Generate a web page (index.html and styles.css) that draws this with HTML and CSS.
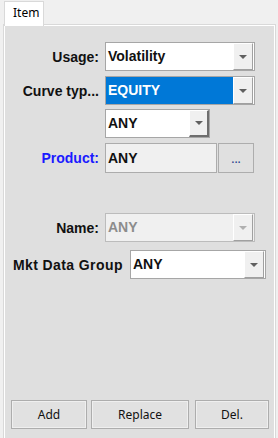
FILE: index.html
```html
<!DOCTYPE html>
<html lang="en">
<head>
  <meta charset="UTF-8">
  <title>Item</title>
  <link rel="stylesheet" href="styles.css">
</head>
<body>
  <div class="tabs">
    <div class="tab">Item</div>
  </div>
  <div class="panel">
    <div class="row row-usage">
      <label class="lbl">Usage:</label>
      <div class="combo w150">
        <span class="val">Volatility</span>
        <span class="drop"><i class="tri"></i></span>
      </div>
    </div>
    <div class="row row-curve">
      <label class="lbl">Curve typ...</label>
      <div class="combo w150 selected">
        <span class="val">EQUITY</span>
        <span class="drop"><i class="tri"></i></span>
      </div>
    </div>
    <div class="row row-any">
      <label class="lbl"></label>
      <div class="combo w105">
        <span class="val">ANY</span>
        <span class="drop raised"><i class="tri"></i></span>
      </div>
    </div>
    <div class="row row-product">
      <label class="lbl link">Product:</label>
      <div class="field">ANY</div>
      <button class="more">...</button>
    </div>
    <div class="row row-name">
      <label class="lbl">Name:</label>
      <div class="combo w150 disabled">
        <span class="val">ANY</span>
        <span class="drop"><i class="tri"></i></span>
      </div>
    </div>
    <div class="row row-group">
      <label class="lbl-wide">Mkt Data Group</label>
      <div class="combo w136">
        <span class="val">ANY</span>
        <span class="drop"><i class="tri"></i></span>
      </div>
    </div>
    <div class="actions">
      <button class="btn btn-add">Add</button>
      <button class="btn btn-replace">Replace</button>
      <button class="btn btn-del">Del.</button>
    </div>
  </div>
</body>
</html>
```

FILE: styles.css
```css
body {
  margin: 0;
  background: #f0f0f0;
  font-family: "Liberation Sans", Arial, sans-serif;
  width: 278px;
  height: 438px;
  overflow: hidden;
}
.tabs {
  display: flex;
  padding: 1px 0 0 4px;
  height: 23px;
}
.tab {
  width: 40px;
  background: #fff;
  border: 1px solid #d9d9d9;
  border-bottom: none;
  font-family: "Noto Sans", sans-serif;
  font-size: 12px;
  line-height: 21px;
  padding-left: 8px;
  box-sizing: border-box;
  position: relative;
  z-index: 1;
  height: 25px;
}
.panel {
  margin: 0 2px 0 3px;
  height: 420px;
  background: #dfdfdf;
  border: 1px solid #d9d9d9;
  box-shadow: inset 1px 1px #fff, inset -1px 0 #fff;
  box-sizing: border-box;
  padding-top: 17px;
}
.row {
  display: flex;
  align-items: center;
  height: 29px;
}
.row-curve { margin-top: 5px; }
.row-any { margin-top: 4px; }
.row-product { margin-top: 5px; height: 30px; }
.row-name { margin-top: 40px; }
.row-group { margin-top: 8px; }
.lbl {
  width: 95px;
  text-align: right;
  font-weight: bold;
  font-size: 14px;
  margin-right: 6px;
  color: #111;
}
.lbl.link { color: #1a1aff; }
.lbl-wide {
  width: 112px;
  font-weight: bold;
  font-size: 14px;
  letter-spacing: 0.4px;
  margin-left: 9px;
  margin-right: 5px;
  color: #111;
  white-space: nowrap;
}
.combo {
  display: flex;
  height: 29px;
  background: #fff;
  border: 1px solid #a6a6a6;
  box-sizing: border-box;
}
.w150 { width: 150px; }
.w105 { width: 105px; }
.w136 { width: 136px; }
.val {
  flex: 1;
  font-weight: bold;
  font-size: 14px;
  line-height: 27px;
  padding-left: 2px;
  color: #111;
}
.selected .val {
  background: #0078d7;
  color: #fff;
}
.disabled {
  background: #f0f0f0;
  border-color: #bcbcbc;
}
.disabled .val { color: #8c8c8c; }
.drop {
  width: 20px;
  background: #f0f0f0;
  border-left: 1px solid #fff;
  border-top: 1px solid #fff;
  border-right: 1px solid #a0a0a0;
  border-bottom: 1px solid #a0a0a0;
  box-sizing: border-box;
  display: flex;
  align-items: center;
  justify-content: center;
  margin-right: 1px;
}
.drop.raised {
  border-right: 2px solid #6e6e6e;
  border-bottom: 2px solid #6e6e6e;
  margin-right: 0;
}
.tri {
  width: 0;
  height: 0;
  border-left: 4px solid transparent;
  border-right: 4px solid transparent;
  border-top: 4px solid #606060;
}
.disabled .tri { border-top-color: #b0b0b0; }
.field {
  width: 112px;
  height: 30px;
  background: #f0f0f0;
  border: 1px solid #acacac;
  box-sizing: border-box;
  font-weight: bold;
  font-size: 14px;
  line-height: 28px;
  padding-left: 2px;
  color: #111;
}
.more {
  width: 36px;
  height: 30px;
  margin-left: 1px;
  background: #e0e0e0;
  border: 1px solid #adadad;
  font-family: "Noto Sans", sans-serif;
  font-size: 12px;
  padding: 0;
  color: #1d3a8a;
}
.actions {
  display: flex;
  margin-top: 121px;
  padding-left: 7px;
}
.btn {
  height: 29px;
  background: #e1e1e1;
  border: 1px solid #adadad;
  box-shadow: inset 0 0 0 1px #efefef;
  font-family: "Noto Sans", sans-serif;
  font-size: 12px;
  color: #111;
  padding: 0;
}
.btn-add { width: 76px; }
.btn-replace { width: 98px; margin-left: 4px; }
.btn-del { width: 74px; margin-left: 6px; }
```
